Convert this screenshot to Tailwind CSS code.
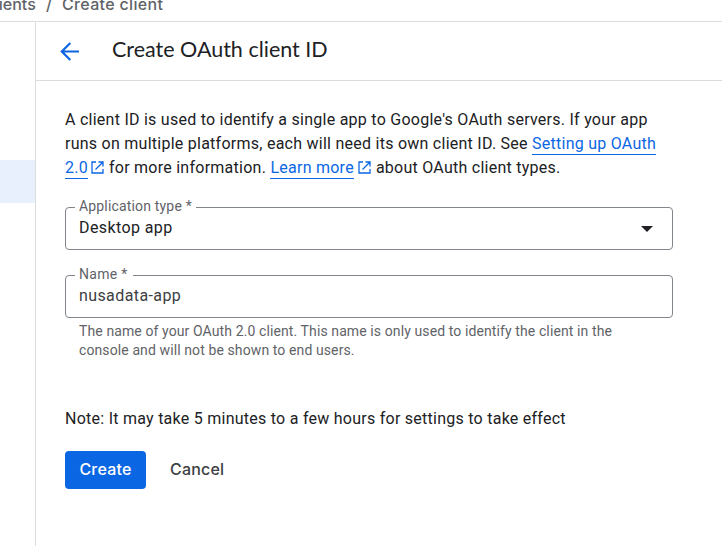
<!DOCTYPE html>
<html lang="en">
<head>
<meta charset="utf-8">
<title>Create OAuth client ID</title>
<script src="https://cdn.jsdelivr.net/npm/@tailwindcss/browser@4"></script>
</head>
<body class="w-[722px] h-[546px] overflow-hidden bg-white font-['Roboto',sans-serif] text-[#202124] flex flex-col">
  <nav class="h-[22px] shrink-0 border-b border-[#dadce0] overflow-hidden flex items-start font-['Inter',sans-serif] text-[16px] leading-5 font-medium text-[#5f6368] whitespace-nowrap">
    <div class="flex -mt-[6px] -ml-[17px]">
      <span class="w-[63px]">Clients</span>
      <span class="w-[16px]">/</span>
      <span class="tracking-[0.33px]">Create client</span>
    </div>
  </nav>
  <div class="flex grow">
    <aside class="w-9 shrink-0 border-r border-[#dadce0] pt-[138px]">
      <div class="h-[43px] bg-[#e8f0fe]"></div>
    </aside>
    <main class="grow flex flex-col">
      <header class="h-[59px] border-b border-[#dadce0] flex items-center pl-[24px]">
        <svg class="size-[19px]" viewBox="0 0 19 19" fill="none" stroke="#0b66e4" stroke-width="2.2"><path d="M19 9.5H1.8M10.3 1L1.8 9.5L10.3 18"/></svg>
        <h1 class="ml-[33px] mt-[-4px] font-['Lato',sans-serif] text-[21.5px] leading-6 whitespace-nowrap">Create OAuth client ID</h1>
      </header>
      <div class="pl-[29px] pt-[27px]">
        <p class="text-[16px] leading-6 tracking-[0.255px] whitespace-nowrap">A client ID is used to identify a single app to Google's OAuth servers. If your app<br>runs on multiple platforms, each will need its own client ID. See <a class="text-[#0b66e4] border-b border-[#0b66e4] pb-[1px]">Setting up OAuth</a><br><a class="text-[#0b66e4] border-b border-[#0b66e4] pb-[1px]">2.0</a><svg class="inline-block size-[13px] ml-[3px] mr-[5px] align-[-1px]" viewBox="0 0 13 13" fill="none" stroke="#0b66e4" stroke-width="1.3"><path d="M5 1H1V12H12V8M7.5 1H12V5.5M12 1L4.5 8.5"/></svg>for more information. <a class="text-[#0b66e4] border-b border-[#0b66e4] pb-[1px]">Learn more</a><svg class="inline-block size-[13px] ml-[4px] mr-[5px] align-[-1px]" viewBox="0 0 13 13" fill="none" stroke="#0b66e4" stroke-width="1.3"><path d="M5 1H1V12H12V8M7.5 1H12V5.5M12 1L4.5 8.5"/></svg>about OAuth client types.</p>
        <div class="relative mt-[27px] w-[608px] h-[43px] rounded-[4px] border border-[#80868b] flex items-center justify-between pl-[13px] pr-[19px]">
          <span class="absolute left-[9px] -top-[11px] w-[121px] pl-[4px] bg-white text-[14px] leading-[18px] text-[#5f6368] tracking-[0.17px] whitespace-nowrap">Application type *</span>
          <span class="-mt-[2px] text-[16px] leading-5 tracking-[0.4px]">Desktop app</span>
          <svg class="w-[12px] h-[6px]" viewBox="0 0 12 6"><path d="M0 0H12L6 6Z" fill="#202124"/></svg>
        </div>
        <div class="relative mt-[25px] w-[608px] h-[43px] rounded-[4px] border border-[#80868b] flex items-center pl-[13px]">
          <span class="absolute left-[9px] -top-[11px] w-[58px] pl-[4px] bg-white text-[14px] leading-[18px] text-[#5f6368] tracking-[0.3px] whitespace-nowrap">Name *</span>
          <span class="-mt-[2px] text-[16px] leading-5 tracking-[0.4px] text-[#3c4043]">nusadata-app</span>
        </div>
        <p class="ml-[14px] mt-[4px] text-[14px] leading-[19px] tracking-[0.105px] text-[#5f6368] whitespace-nowrap">The name of your OAuth 2.0 client. This name is only used to identify the client in the<br>console and will not be shown to end users.</p>
        <p class="mt-[47px] text-[16px] leading-6 tracking-[0.255px] whitespace-nowrap">Note: It may take 5 minutes to a few hours for settings to take effect</p>
        <div class="mt-[20px] flex items-center font-['Inter',sans-serif] text-[16px] leading-5 font-medium tracking-[0.2px]">
          <button class="w-[81px] h-[38px] pb-[2px] rounded-[4px] bg-[#0b66e4] text-white">Create</button>
          <button class="ml-[24px] pb-[2px] text-[#3c4043]">Cancel</button>
        </div>
      </div>
    </main>
  </div>
</body>
</html>
